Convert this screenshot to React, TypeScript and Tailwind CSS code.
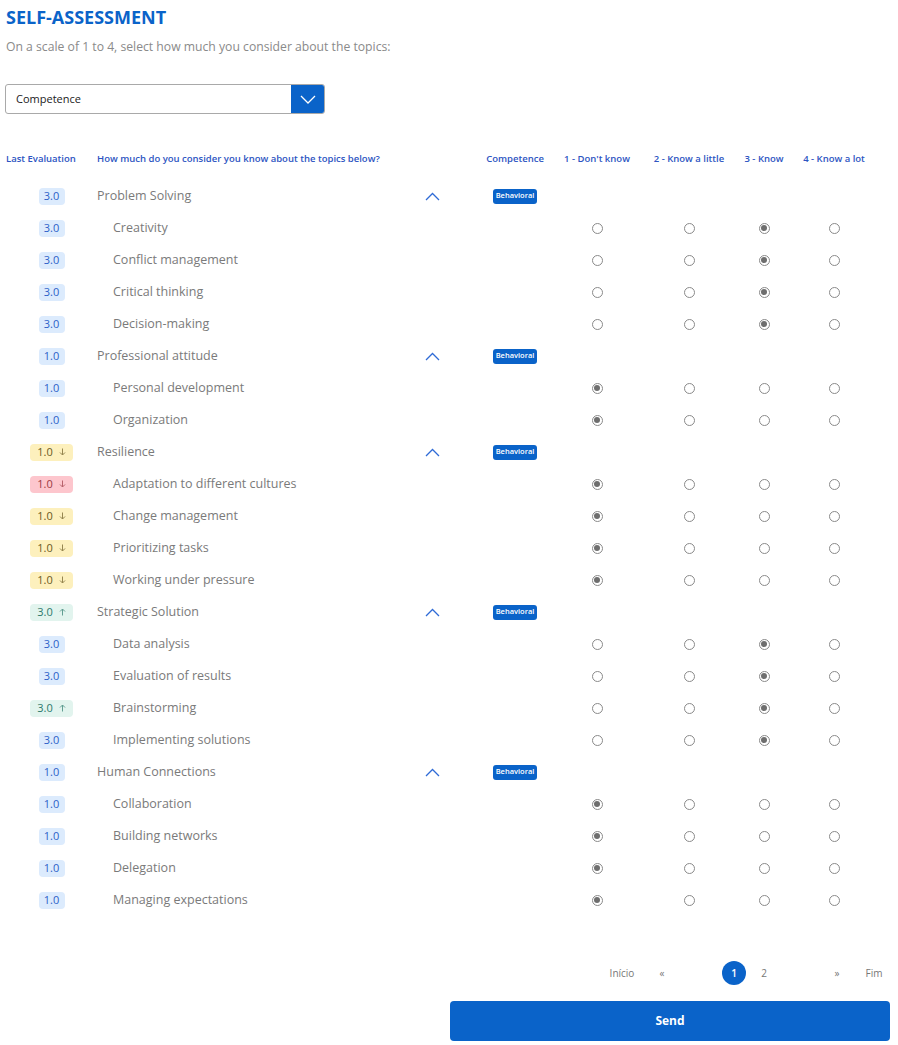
import { Fragment } from 'react';

type Trend = 'none' | 'down' | 'downRed' | 'up';

type Item = { name: string; score: string; trend: Trend; answer: number };
type Group = { name: string; score: string; trend: Trend; items: Item[] };

// dados da autoavaliação
const GROUPS: Group[] = [
  {
    name: 'Problem Solving', score: '3.0', trend: 'none',
    items: [
      { name: 'Creativity', score: '3.0', trend: 'none', answer: 3 },
      { name: 'Conflict management', score: '3.0', trend: 'none', answer: 3 },
      { name: 'Critical thinking', score: '3.0', trend: 'none', answer: 3 },
      { name: 'Decision-making', score: '3.0', trend: 'none', answer: 3 },
    ],
  },
  {
    name: 'Professional attitude', score: '1.0', trend: 'none',
    items: [
      { name: 'Personal development', score: '1.0', trend: 'none', answer: 1 },
      { name: 'Organization', score: '1.0', trend: 'none', answer: 1 },
    ],
  },
  {
    name: 'Resilience', score: '1.0', trend: 'down',
    items: [
      { name: 'Adaptation to different cultures', score: '1.0', trend: 'downRed', answer: 1 },
      { name: 'Change management', score: '1.0', trend: 'down', answer: 1 },
      { name: 'Prioritizing tasks', score: '1.0', trend: 'down', answer: 1 },
      { name: 'Working under pressure', score: '1.0', trend: 'down', answer: 1 },
    ],
  },
  {
    name: 'Strategic Solution', score: '3.0', trend: 'up',
    items: [
      { name: 'Data analysis', score: '3.0', trend: 'none', answer: 3 },
      { name: 'Evaluation of results', score: '3.0', trend: 'none', answer: 3 },
      { name: 'Brainstorming', score: '3.0', trend: 'up', answer: 3 },
      { name: 'Implementing solutions', score: '3.0', trend: 'none', answer: 3 },
    ],
  },
  {
    name: 'Human Connections', score: '1.0', trend: 'none',
    items: [
      { name: 'Collaboration', score: '1.0', trend: 'none', answer: 1 },
      { name: 'Building networks', score: '1.0', trend: 'none', answer: 1 },
      { name: 'Delegation', score: '1.0', trend: 'none', answer: 1 },
      { name: 'Managing expectations', score: '1.0', trend: 'none', answer: 1 },
    ],
  },
];

const ArrowIcon = ({ up }: { up: boolean }) => (
  <svg width="7" height="8" viewBox="0 0 7 8" fill="none" className="opacity-70">
    {up ? (
      <path d="M3.5 7.5 V1 M1 3.5 L3.5 1 L6 3.5" stroke="currentColor" strokeWidth="1" />
    ) : (
      <path d="M3.5 0.5 V7 M1 4.5 L3.5 7 L6 4.5" stroke="currentColor" strokeWidth="1" />
    )}
  </svg>
);

const ScoreBadge = ({ score, trend }: { score: string; trend: Trend }) => {
  if (trend === 'none') {
    return (
      <span className="inline-flex items-center justify-center w-[26px] h-[17px] rounded-[4px] bg-[#dcebfd] text-[#2c5fc8] text-[11px]">
        {score}
      </span>
    );
  }
  const cls =
    trend === 'up'
      ? 'bg-[#e2f4ee] text-[#2b7a6c]'
      : trend === 'downRed'
      ? 'bg-[#fdc6cd] text-[#9b3a44]'
      : 'bg-[#fdf0bd] text-[#6b5a22]';
  return (
    <span className={`inline-flex items-center justify-center gap-[6px] w-[43px] h-[17px] rounded-[4px] text-[11px] ${cls}`}>
      {score}
      <ArrowIcon up={trend === 'up'} />
    </span>
  );
};

const Radio = ({ checked }: { checked: boolean }) => (
  <span className="inline-flex items-center justify-center w-[11px] h-[11px] rounded-full border border-[#8a8a8a] bg-white">
    {checked && <span className="w-[6px] h-[6px] rounded-full bg-[#6e6e6e]" />}
  </span>
);

const ChevronUp = () => (
  <svg width="15" height="9" viewBox="0 0 15 9" fill="none">
    <path d="M1 8 L7.5 1.5 L14 8" stroke="#2f6bd6" strokeWidth="1.3" />
  </svg>
);

const SelfAssessment = () => {
  const header = ['Competence', '1 - Don\'t know', '2 - Know a little', '3 - Know', '4 - Know a lot'];

  return (
    <div className="min-h-screen bg-white px-[5px] font-['Open_Sans','Noto_Sans',sans-serif]">
      {/* Header */}
      <h1 className="pt-[5px] text-[18px] leading-[24px] font-bold text-[#0a63c9] pl-[1px]">SELF-ASSESSMENT</h1>
      <p className="mt-[8px] text-[12.2px] leading-[20px] text-[#8a8a8a] pl-[1px]">
        On a scale of 1 to 4, select how much you consider about the topics:
      </p>

      {/* Select */}
      <div className="mt-[27px] w-[320px] h-[30px] flex border border-[#a9a9a9] rounded-[3px] overflow-hidden">
        <div className="flex-1 flex items-center pl-[10px] text-[11px] text-[#222]">Competence</div>
        <div className="w-[33px] bg-[#0a63c9] flex items-center justify-center">
          <svg width="16" height="9" viewBox="0 0 16 9" fill="none">
            <path d="M1 1 L8 8 L15 1" stroke="white" strokeWidth="1.3" />
          </svg>
        </div>
      </div>

      {/* Table */}
      <div className="mt-[29px] ml-[1px] grid grid-cols-[91px_379px_78px_86px_98px_52px_88px] grid-rows-[37px] auto-rows-[32px]">
        <div className="pb-[5px] flex items-center text-[9.5px] font-semibold text-[#2d55c2]">Last Evaluation</div>
        <div className="pb-[5px] flex items-center text-[9.5px] font-semibold text-[#2d55c2]">
          How much do you consider you know about the topics below?
        </div>
        {header.map((h) => (
          <div key={h} className="pb-[5px] flex items-center justify-center text-[9.5px] font-semibold text-[#2d55c2] whitespace-nowrap">
            {h}
          </div>
        ))}

        {GROUPS.map((g) => (
          <Fragment key={g.name}>
            <div className="flex items-center justify-center"><ScoreBadge score={g.score} trend={g.trend} /></div>
            <div className="flex items-center justify-between pr-[36px] text-[12.5px] text-[#7a7a7a]">
              <span>{g.name}</span>
              <ChevronUp />
            </div>
            <div className="flex items-center justify-center">
              <span className="bg-[#0a63c9] text-white text-[7.5px] font-semibold rounded-[3px] px-[3px] h-[15px] flex items-center">Behavioral</span>
            </div>
            <div /><div /><div /><div />

            {g.items.map((it) => (
              <Fragment key={it.name}>
                <div className="flex items-center justify-center"><ScoreBadge score={it.score} trend={it.trend} /></div>
                <div className="flex items-center pl-[16px] text-[12.5px] text-[#7a7a7a]">{it.name}</div>
                <div />
                {[1, 2, 3, 4].map((n) => (
                  <div key={n} className="flex items-center justify-center">
                    <Radio checked={it.answer === n} />
                  </div>
                ))}
              </Fragment>
            ))}
          </Fragment>
        ))}
      </div>

      {/* Pagination */}
      <div className="mt-[45px] h-[24px] flex items-center justify-end text-[10px] text-[#777]">
        <span className="w-[48px] text-center">Início</span>
        <span className="w-[32px] text-center">«</span>
        <span className="ml-[44px] w-[24px] h-[24px] rounded-full bg-[#0a63c9] text-white font-semibold flex items-center justify-center">1</span>
        <span className="w-[36px] text-center">2</span>
        <span className="ml-[45px] w-[20px] text-center">»</span>
        <span className="ml-[8px] w-[38px] text-center">Fim</span>
      </div>

      {/* Send */}
      <div className="mt-[16px] flex justify-end pr-[3px]">
        <button className="w-[440px] h-[40px] rounded-[4px] bg-[#0a63c9] text-white text-[12px] font-bold">Send</button>
      </div>
    </div>
  );
};

export default SelfAssessment;
